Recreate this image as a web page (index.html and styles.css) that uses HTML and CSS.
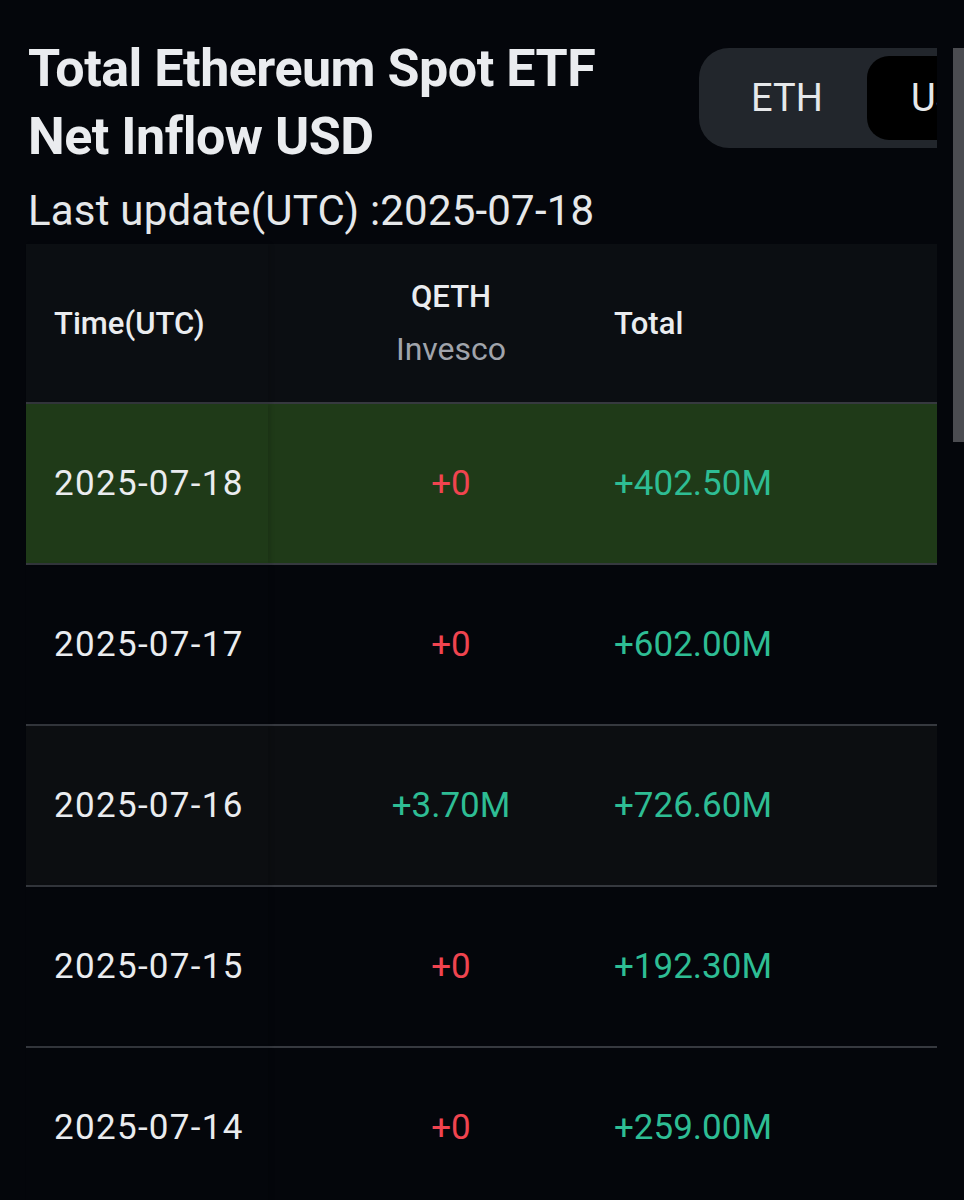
FILE: index.html
```html
<!DOCTYPE html>
<html lang="en">
<head>
<meta charset="utf-8">
<title>Total Ethereum Spot ETF Net Inflow USD</title>
<link rel="stylesheet" href="styles.css">
</head>
<body>
<div class="viewport">
  <div class="page">
    <div class="top">
      <h1 class="title">Total Ethereum Spot ETF<br>Net Inflow USD</h1>
      <div class="toggle">
        <span class="tab">ETH</span>
        <span class="tab active">USD</span>
      </div>
    </div>
    <p class="updated">Last update(UTC) :2025-07-18</p>
    <div class="table">
      <div class="row head">
        <div class="cell c1">Time(UTC)</div>
        <div class="cell c2"><span class="tick">QETH</span><span class="issuer">Invesco</span></div>
        <div class="cell c3">Total</div>
      </div>
      <div class="row hl">
        <div class="cell c1">2025-07-18</div>
        <div class="cell c2 neg">+0</div>
        <div class="cell c3 pos">+402.50M</div>
      </div>
      <div class="row">
        <div class="cell c1">2025-07-17</div>
        <div class="cell c2 neg">+0</div>
        <div class="cell c3 pos">+602.00M</div>
      </div>
      <div class="row alt">
        <div class="cell c1">2025-07-16</div>
        <div class="cell c2 pos">+3.70M</div>
        <div class="cell c3 pos">+726.60M</div>
      </div>
      <div class="row">
        <div class="cell c1">2025-07-15</div>
        <div class="cell c2 neg">+0</div>
        <div class="cell c3 pos">+192.30M</div>
      </div>
      <div class="row last">
        <div class="cell c1">2025-07-14</div>
        <div class="cell c2 neg">+0</div>
        <div class="cell c3 pos">+259.00M</div>
      </div>
    </div>
  </div>
  <div class="scrollbar"></div>
</div>
</body>
</html>
```
FILE: styles.css
```css
html, body {
  margin: 0;
  padding: 0;
  background: #04060b;
}
body {
  font-family: Roboto, "Noto Sans", sans-serif;
  color: #eaecef;
}
.viewport {
  position: relative;
  width: 964px;
  height: 1200px;
  overflow: hidden;
}
.page {
  width: 911px;
  padding-left: 26px;
  overflow: hidden;
}
.top {
  display: flex;
  align-items: flex-start;
  padding-top: 35px;
}
.title {
  flex: none;
  width: 671px;
  margin: 0 0 0 2px;
  font-size: 52px;
  line-height: 68px;
  font-weight: 700;
  letter-spacing: -0.5px;
  white-space: nowrap;
}
.toggle {
  flex: none;
  margin-top: 13px;
  display: flex;
  padding: 8px;
  height: 84px;
  background: #22262c;
  border-radius: 30px;
}
.tab {
  width: 160px;
  display: flex;
  align-items: center;
  justify-content: center;
  font-size: 38px;
  color: #e6e8ea;
  border-radius: 22px;
}
.tab.active {
  background: #000;
}
.updated {
  margin: 15px 0 8px 2px;
  font-size: 42px;
  line-height: 50px;
  font-weight: 400;
  letter-spacing: 0.2px;
  color: #e6e8ea;
}
.table {
  display: flex;
  flex-direction: column;
}
.row {
  display: grid;
  grid-template-columns: 242px 346px 1fr;
  height: 159px;
  border-bottom: 2px solid #36393f;
  font-size: 35px;
}
.row.head {
  height: 158px;
  background: #0b0e12;
  font-size: 31px;
  font-weight: 500;
}
.row.hl { background: #1f3a18; }
.row.alt { background: #0c0e11; }
.row.last { border-bottom: none; }
.cell {
  display: flex;
  align-items: center;
}
.c1 {
  padding-left: 28px;
  box-shadow: 3px 0 4px rgba(0, 0, 0, 0.12);
}
.row:not(.head) .c1 {
  letter-spacing: 1.3px;
}
.c2 {
  padding-left: 20px;
  justify-content: center;
  flex-direction: column;
  text-align: center;
}
.c3 { padding-left: 0; }
.tick { line-height: 52px; }
.issuer {
  line-height: 52px;
  font-size: 32px;
  color: #a0a4ab;
  font-weight: 400;
}
.neg { color: #f0444f; }
.pos { color: #2ebd94; }
.scrollbar {
  position: absolute;
  top: 48px;
  right: 0;
  width: 11px;
  height: 394px;
  background: #4b4c51;
}
```
